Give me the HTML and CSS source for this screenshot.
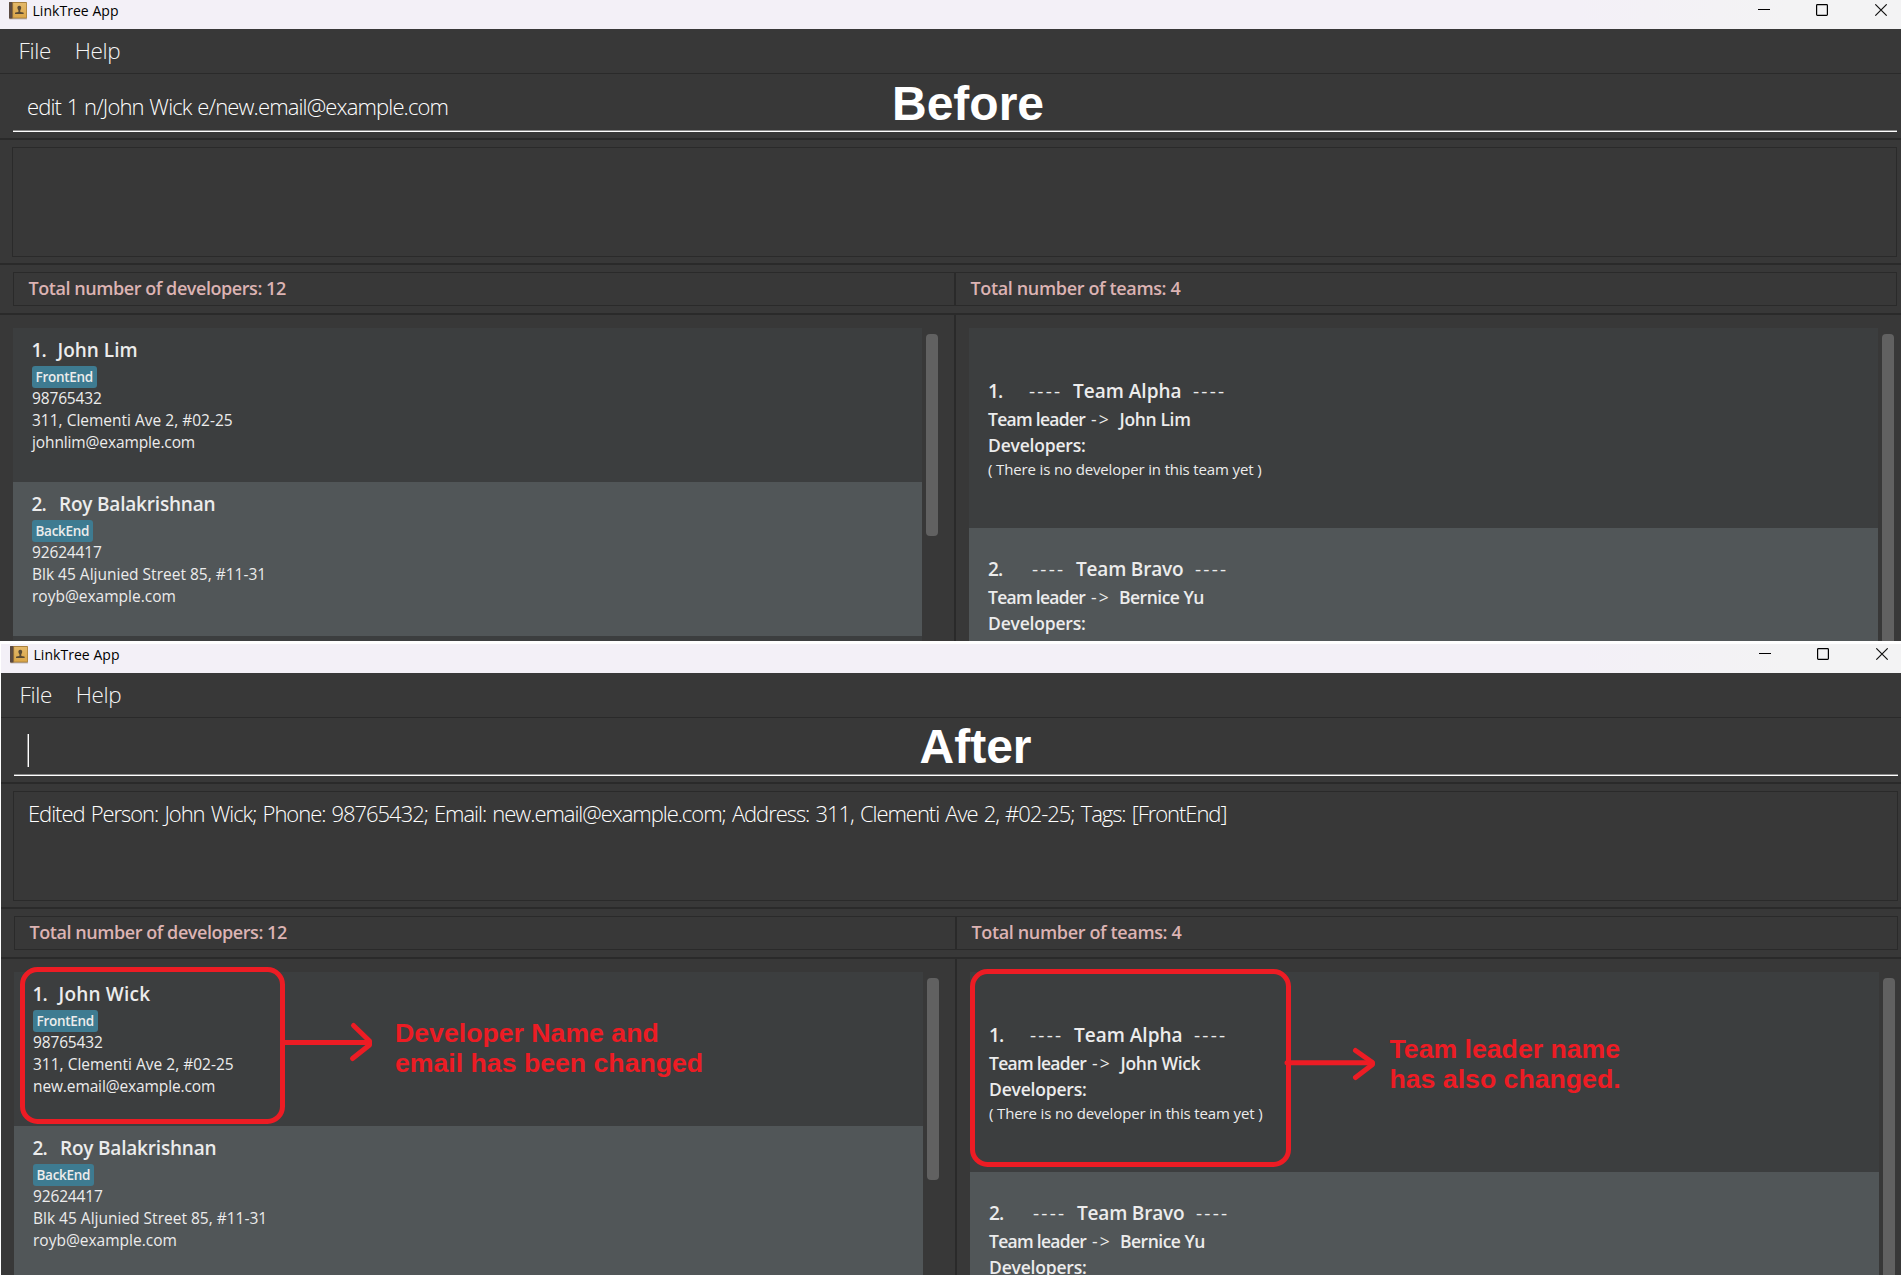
FILE: index.html
```html
<!DOCTYPE html>
<html lang="en">
<head>
<meta charset="utf-8">
<title>LinkTree App</title>
<link rel="stylesheet" href="styles.css">
</head>
<body>
<svg class="defs" width="0" height="0">
  <defs>
    <linearGradient id="cover" x1="0" y1="0" x2="0" y2="1"><stop offset="0" stop-color="#e3b869"/><stop offset="1" stop-color="#dba648"/></linearGradient>
    <symbol id="book" viewBox="0 0 18 18">
      <rect x="0.5" y="16" width="17.5" height="1.4" fill="#b9b2b4"/>
      <rect x="0" y="0" width="18" height="16.4" rx="0.8" fill="#a9803c"/>
      <rect x="4" y="1" width="13.2" height="14.6" fill="url(#cover)"/>
      <rect x="0" y="0" width="3.2" height="16.4" rx="0.6" fill="#5a4a42"/>
      <rect x="3.2" y="0" width="0.9" height="16.4" fill="#8a6a3c"/>
      <path d="M10.300 3.800c1.500 0 2 1 1.900 2.300-.1 1-.5 1.700-.9 2.200v1.600l3 .7c.4.200.4.700.4 1.400H6c0-.7 0-1.200.4-1.400l3-.7V8.300c-.5-.5-.9-1.200-1-2.200-.1-1.300.4-2.300 1.900-2.300z" fill="#594a35"/>
    </symbol>
    <symbol id="controls" viewBox="0 0 130 12">
      <path d="M0 5.500h12" stroke="#000" fill="none"/>
      <rect x="58.600" y="0.600" width="10.800" height="10.800" rx="0.800" fill="none" stroke="#000" stroke-width="1.200"/>
      <path d="M117.300.300l11.400 11.400M128.700.300L117.300 11.700" stroke="#111" stroke-width="1.100" fill="none"/>
    </symbol>
  </defs>
</svg>

<section class="window">
  <header class="titlebar">
    <svg class="app-icon"><use href="#book"/></svg><span class="app-name">LinkTree App</span>
    <svg class="controls"><use href="#controls"/></svg>
  </header>
  <nav class="menu"><span class="file">File</span><span>Help</span></nav>
  <div class="command"><div class="input">edit 1 n/John Wick e/new.email@example.com</div><h1 class="caption before">Before</h1></div>
  <div class="result"><div class="result-box"></div></div>
  <div class="counts">
    <div class="count devs">Total number of developers: 12</div>
    <div class="count teams">Total number of teams: 4</div>
  </div>
  <div class="lists">
    <div class="pane left">
      <div class="list">
        <article class="dev">
          <h2><span class="num">1.</span><span class="jl">John Lim</span></h2>
          <div class="tags"><span class="tag">FrontEnd</span></div>
          <p class="phone">98765432</p><p>311, Clementi Ave 2, #02-25</p><p class="mail">johnlim@example.com</p>
        </article>
        <article class="dev alt">
          <h2><span class="num">2.</span><span class="roy">Roy Balakrishnan</span></h2>
          <div class="tags"><span class="tag back">BackEnd</span></div>
          <p class="phone">92624417</p><p>Blk 45 Aljunied Street 85, #11-31</p><p>royb@example.com</p>
        </article>
        <article class="dev"></article>
      </div>
      <div class="thumb"></div>
    </div>
    <div class="pane right">
      <div class="list">
        <article class="team first">
          <h2><span class="num">1.</span><span class="dash">----</span><span class="tname">Team Alpha</span><span class="dash">----</span></h2>
          <h3><span class="lead">Team leader</span><span class="arrow">-&gt;</span><span class="person">John Lim</span></h3>
          <h3 class="dlabel">Developers:</h3>
          <p>( There is no developer in this team yet )</p>
        </article>
        <article class="team alt">
          <h2><span class="num">2.</span><span class="dash">----</span><span class="tname bravo">Team Bravo</span><span class="dash">----</span></h2>
          <h3><span class="lead">Team leader</span><span class="arrow">-&gt;</span><span class="person bernice">Bernice Yu</span></h3>
          <h3 class="dlabel">Developers:</h3>
        </article>
      </div>
      <div class="thumb long"></div>
    </div>
  </div>
</section>

<section class="window second">
  <header class="titlebar">
    <svg class="app-icon"><use href="#book"/></svg><span class="app-name">LinkTree App</span>
    <svg class="controls"><use href="#controls"/></svg>
  </header>
  <nav class="menu"><span class="file">File</span><span>Help</span></nav>
  <div class="command"><div class="input"><span class="caret"></span></div><h1 class="caption after">After</h1></div>
  <div class="result"><div class="result-box">Edited Person: John Wick; Phone: 98765432; Email: new.email@example.com; Address: 311, Clementi Ave 2, #02-25; Tags: [FrontEnd]</div></div>
  <div class="counts">
    <div class="count devs">Total number of developers: 12</div>
    <div class="count teams">Total number of teams: 4</div>
  </div>
  <div class="lists">
    <div class="pane left">
      <div class="list">
        <article class="dev">
          <h2><span class="num">1.</span><span class="jw">John Wick</span></h2>
          <div class="tags"><span class="tag">FrontEnd</span></div>
          <p class="phone">98765432</p><p>311, Clementi Ave 2, #02-25</p><p class="mail">new.email@example.com</p>
        </article>
        <article class="dev alt">
          <h2><span class="num">2.</span><span class="roy">Roy Balakrishnan</span></h2>
          <div class="tags"><span class="tag back">BackEnd</span></div>
          <p class="phone">92624417</p><p>Blk 45 Aljunied Street 85, #11-31</p><p>royb@example.com</p>
        </article>
      </div>
      <div class="thumb"></div>
    </div>
    <div class="pane right">
      <div class="list">
        <article class="team first">
          <h2><span class="num">1.</span><span class="dash">----</span><span class="tname">Team Alpha</span><span class="dash">----</span></h2>
          <h3><span class="lead">Team leader</span><span class="arrow">-&gt;</span><span class="person">John Wick</span></h3>
          <h3 class="dlabel">Developers:</h3>
          <p>( There is no developer in this team yet )</p>
        </article>
        <article class="team alt">
          <h2><span class="num">2.</span><span class="dash">----</span><span class="tname bravo">Team Bravo</span><span class="dash">----</span></h2>
          <h3><span class="lead">Team leader</span><span class="arrow">-&gt;</span><span class="person bernice">Bernice Yu</span></h3>
          <h3 class="dlabel">Developers:</h3>
        </article>
      </div>
      <div class="thumb long"></div>
    </div>
  </div>
</section>

<svg class="marks" viewBox="0 0 1901 1275">
  <rect x="22.500" y="969.500" width="260" height="152" rx="15"/>
  <path d="M285 1042.500h84"/><path class="head" d="M353.500 1025.500L369.500 1041v4L352.500 1058.500"/>
  <rect x="972.500" y="971.500" width="316" height="193" rx="15"/>
  <path class="head" d="M1287 1062.700h85"/><path class="head" d="M1355.500 1050.500l17 12v2L1355.500 1077.500"/>
</svg>
<div class="note note-dev">Developer Name and<br>email has been changed</div>
<div class="note note-team">Team leader name<br>has also changed.</div>
</body>
</html>
```
FILE: styles.css
```css
* { box-sizing: border-box; }
body {
  position: relative;
  margin: 0;
  width: 1901px;
  height: 1275px;
  overflow: hidden;
  background: #fff;
  color: #ececec;
  font-family: "Open Sans", "Noto Sans", sans-serif;
  display: flex;
  flex-direction: column;
  gap: 3px;
}
h1, h2, h3, p { margin: 0; font-weight: 600; white-space: pre; }
.defs { position: absolute; }

.window { flex: none; display: flex; flex-direction: column; height: 641px; background: #383838; overflow: hidden; }
.second { margin-left: 1px; width: 1901px; height: 631px; }

.titlebar { flex: none; height: 29px; display: flex; align-items: flex-start; padding-left: 9px; background: linear-gradient(90deg, #f3f0f7 0 83%, #f3f3f4 94%); }
.app-icon { width: 18px; height: 18px; margin-top: 2px; }
.app-name { margin-left: 5.5px; font-size: 14px; line-height: 21px; letter-spacing: 0.04px; color: #000; }
.controls { width: 130px; height: 12px; margin: 4px 13px 0 auto; }

.menu { flex: none; height: 45px; display: flex; gap: 23.5px; padding-left: 18.5px; border-bottom: 1px solid #2a2a2a; font-size: 22.5px; font-weight: 300; letter-spacing: -0.3px; line-height: 43px; color: #f4f4f4; }

.command { flex: none; position: relative; height: 66px; padding: 7px 4px 0 13px; border-bottom: 2px solid #2a2a2a; }
.input { height: 51px; padding-left: 14px; border-bottom: 1px solid #fff; box-shadow: inset 0 -1px #8a8a8a; font-size: 22px; font-weight: 300; letter-spacing: -0.86px; word-spacing: 0.8px; line-height: 50px; color: #fff; }
.caret { display: block; width: 2px; height: 33px; margin-left: -1px; background: linear-gradient(90deg, #8c8c8c 50%, #fff 50%); transform: translateY(9px); }
.caption { position: absolute; top: 0; font: bold 48px/55px "Liberation Sans", Arial, sans-serif; color: #fff; }
.before { left: 892px; top: 2px; }
.after { left: 918.5px; top: 1px; }

.result { flex: none; height: 125px; padding: 7px 4px 6px 12px; border-bottom: 2px solid #2a2a2a; }
.result-box { height: 110px; padding: 6px 0 0 14px; border: 1px solid #2a2a2a; font-size: 22px; font-weight: 300; letter-spacing: -1.045px; word-spacing: 1.5px; line-height: 31px; color: #fff; white-space: pre; }

.counts { flex: none; height: 50px; display: flex; padding: 7px 4px 7px 13px; border-bottom: 2px solid #2a2a2a; }
.count { height: 34px; border: 1px solid #2a2a2a; font-size: 18px; font-weight: 600; line-height: 30px; color: #dcb3b3; }
.devs { width: 942px; padding-left: 14.5px; letter-spacing: -0.44px; }
.teams { width: 942px; padding-left: 14.5px; letter-spacing: -0.353px; }

.lists { flex: 1; min-height: 0; display: flex; }
.pane { display: flex; padding-top: 13px; height: 100%; }
.left { width: 956px; padding-left: 13px; border-right: 2px solid #2a2a2a; }
.right { flex: 1; padding-left: 13px; }
.list { width: 909px; height: 100%; overflow: hidden; background: #3c3e3f; }
.thumb { width: 12.5px; height: 202px; margin: 5.5px 0 0 3.75px; border-radius: 4px; background: #616161; }
.long { height: 400px; }

.dev { height: 154px; padding: 8px 0 0 19px; background: #3c3e3f; }
.team { height: 200px; padding: 27px 0 0 19px; background: #3c3e3f; }
.first { padding-top: 49px; }
.dev.alt, .team.alt { background: #515658; }
h2 { display: flex; height: 28px; font-size: 19px; line-height: 28px; }
.dev .num { width: 27.5px; margin-left: -0.5px; letter-spacing: -0.8px; }
.jl, .jw { margin-left: -1.5px; }
.roy { letter-spacing: -0.2px; }
.jw { letter-spacing: 0.2px; }
.tags { height: 23px; padding-top: 2px; }
.tag { display: block; width: 65px; height: 22px; padding-left: 3.5px; border-radius: 3px; background: #3e7b91; font-size: 13.5px; font-weight: 600; line-height: 22px; letter-spacing: -0.28px; }
.back { width: 61px; }
.dev p { font-size: 15.5px; font-weight: 400; line-height: 22px; }
.dev .phone { letter-spacing: -0.15px; }
.dev .mail { letter-spacing: -0.12px; }

.team .num { width: 41px; letter-spacing: -0.8px; }
.alt .dash:nth-child(2) { margin-left: 3px; }
.dash { width: 44px; font-weight: 400; letter-spacing: 2.2px; }
.tname { width: 120px; }
.bravo { width: 119px; letter-spacing: -0.185px; }
h3 { display: flex; font-size: 17.5px; line-height: 26px; }
h2 + h3 { margin-top: 1px; }
.lead { width: 103px; letter-spacing: -0.72px; }
.arrow { width: 30px; font-weight: 400; letter-spacing: 2px; }
.person { margin-left: -1.5px; letter-spacing: -0.35px; }
.bernice { margin-left: -2px; letter-spacing: -0.5px; }
.dlabel { letter-spacing: -0.2px; }
.team p { font-size: 15px; font-weight: 500; line-height: 22px; letter-spacing: -0.14px; }

/* Hand-drawn annotations laid over the second window */
.marks { position: absolute; left: 0; top: 0; width: 1901px; height: 1275px; fill: none; stroke: #ed1c24; stroke-width: 5px; }
.head { stroke-linecap: round; stroke-linejoin: round; }
.note { position: absolute; font: bold 26.67px/30px "Liberation Sans", Arial, sans-serif; color: #ed1c24; white-space: nowrap; }
.note-dev { left: 395px; top: 1018px; }
.note-team { left: 1389.5px; top: 1034px; }
```
